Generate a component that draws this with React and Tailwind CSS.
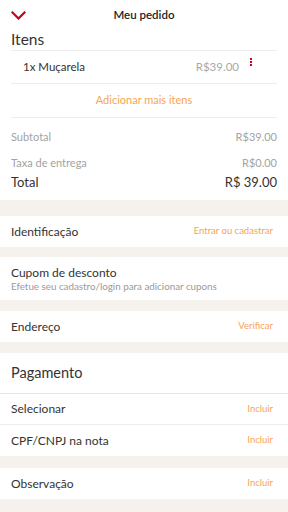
import React from 'react';

function Chevron() {
  return (
    <svg width="15" height="9" viewBox="0 0 15 9" className="block">
      <path d="M1.5 1.5 L7.5 7.5 L13.5 1.5" fill="none" stroke="#c8001e" strokeWidth="2.2" strokeLinecap="square" />
    </svg>
  );
}

function Row({ label, action, border }) {
  return (
    <div className={`flex items-center justify-between h-[31px] px-[11px] bg-white ${border ? 'border-b border-[#ececec]' : ''}`}>
      <span className="text-[12px] text-[#333]">{label}</span>
      <span className="text-[9.5px] text-[#f8a453] mr-[4px]">{action}</span>
    </div>
  );
}

function Band({ h }) {
  return <div className={`bg-[#f5f1ec] ${h}`} />;
}

export default function App() {
  return (
    <div className="w-[288px] h-[512px] overflow-hidden bg-white" style={{ fontFamily: 'Lato, "Open Sans", sans-serif' }}>
      <div className="relative flex items-center justify-center h-[30px]">
        <div className="absolute left-[11px] top-[11px]"><Chevron /></div>
        <span className="text-[11.5px] font-semibold text-[#222]">Meu pedido</span>
      </div>

      <div className="px-[11px]">
        <div className="h-[21px] border-b border-[#ececec] flex items-start">
          <span className="text-[15.5px] leading-[18px] text-[#333]">Itens</span>
        </div>
        <div className="flex items-center h-[33px] border-b border-[#ececec] pl-[12px] pr-[38px] relative">
          <span className="text-[11.5px] text-[#333] flex-1">1x Muçarela</span>
          <span className="text-[11.5px] text-[#a8a8a8]">R$39.00</span>
          <div className="absolute right-[25px] top-[7px] flex flex-col gap-[1px]">
            <span className="w-[2px] h-[2px] bg-[#d0021b]" />
            <span className="w-[2px] h-[2px] bg-[#d0021b]" />
            <span className="w-[2px] h-[2px] bg-[#d0021b]" />
          </div>
        </div>
        <div className="flex items-center justify-center h-[34px] border-b border-[#ececec]">
          <span className="text-[11px] text-[#f8a453]">Adicionar mais itens</span>
        </div>
        <div className="flex items-center justify-between h-[36px] pt-[2px] text-[11px] text-[#a3a3a3]">
          <span>Subtotal</span>
          <span>R$39.00</span>
        </div>
        <div className="flex items-center justify-between h-[18px] text-[11px] text-[#a3a3a3]">
          <span>Taxa de entrega</span>
          <span>R$0.00</span>
        </div>
        <div className="flex items-center justify-between h-[22px] text-[13px] text-[#333]">
          <span>Total</span>
          <span>R$ 39.00</span>
        </div>
        <div className="h-[6px]" />
      </div>

      <Band h="h-[16px]" />
      <Row label="Identificação" action="Entrar ou cadastrar" />
      <Band h="h-[10px]" />
      <div className="h-[43px] px-[11px] flex flex-col justify-center">
        <span className="text-[12px] leading-[15px] text-[#333]">Cupom de desconto</span>
        <span className="text-[9.8px] leading-[13px] text-[#9a9a9a]">Efetue seu cadastro/login para adicionar cupons</span>
      </div>
      <Band h="h-[11px]" />
      <Row label="Endereço" action="Verificar" />
      <Band h="h-[11px]" />
      <div className="h-[41px] px-[11px] flex items-center border-b border-[#e4e4e4]">
        <span className="text-[14.5px] text-[#333]">Pagamento</span>
      </div>
      <Row label="Selecionar" action="Incluir" border />
      <Row label="CPF/CNPJ na nota" action="Incluir" />
      <Band h="h-[12px]" />
      <Row label="Observação" action="Incluir" />
      <Band h="h-[14px]" />
    </div>
  );
}
